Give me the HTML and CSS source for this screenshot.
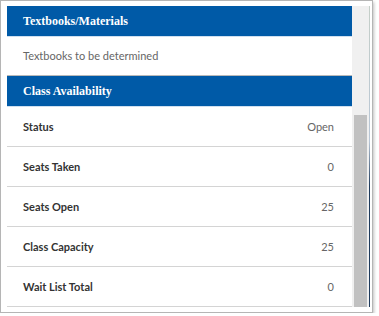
FILE: index.html
```html
<!DOCTYPE html>
<html lang="en">
<head>
    <meta charset="UTF-8">
    <meta name="viewport" content="width=device-width, initial-scale=1.0">
    <title>Class Details</title>
    <link rel="stylesheet" href="styles.css">
</head>
<body>
    <div class="frame">
        <div class="viewport">
            <div class="content">
                <div class="section-title">Textbooks/Materials</div>
                <div class="note">Textbooks to be determined</div>
                <div class="section-title">Class Availability</div>
                <div class="row">
                    <span class="label">Status</span>
                    <span class="value">Open</span>
                </div>
                <div class="row">
                    <span class="label">Seats Taken</span>
                    <span class="value">0</span>
                </div>
                <div class="row">
                    <span class="label">Seats Open</span>
                    <span class="value">25</span>
                </div>
                <div class="row">
                    <span class="label">Class Capacity</span>
                    <span class="value">25</span>
                </div>
                <div class="row">
                    <span class="label">Wait List Total</span>
                    <span class="value">0</span>
                </div>
            </div>
            <div class="scrollbar">
                <div class="thumb"></div>
            </div>
            <div class="edge"></div>
        </div>
    </div>
</body>
</html>
```

FILE: styles.css
```css
body {
    margin: 0;
    background: #fff;
    font-family: 'Lato', sans-serif;
}
.frame {
    width: 373px;
    height: 313px;
    border: 1px solid #b5b5b5;
    box-shadow: 1px 2px 3px rgba(0, 0, 0, 0.25);
    background: #fff;
    padding: 5px 2px 5px 6px;
    box-sizing: border-box;
}
.viewport {
    display: flex;
    height: 301px;
    overflow: hidden;
}
.content {
    flex: 1;
    overflow: hidden;
}
.section-title {
    background: #005aa7;
    color: #fff;
    font-family: 'Liberation Serif', serif;
    font-weight: bold;
    font-size: 12px;
    height: 30px;
    line-height: 30px;
    padding-left: 16px;
    border-bottom: 1px solid #cfe0f0;
}
.note {
    height: 38px;
    line-height: 38px;
    padding-left: 16px;
    font-size: 11px;
    color: #666;
    border-bottom: 1px solid #b9b9b9;
}
.row {
    display: flex;
    justify-content: space-between;
    align-items: center;
    height: 39px;
    padding: 0 18px 0 16px;
    border-bottom: 1px solid #d4d4d4;
    font-size: 11px;
}
.label {
    font-weight: bold;
    color: #333;
}
.value {
    color: #666;
}
.scrollbar {
    width: 17px;
    background: #f0f0f0;
    padding: 109px 2px 0;
    box-sizing: border-box;
}
.thumb {
    height: 192px;
    background: #c1c1c1;
}
.edge {
    width: 1px;
    background: linear-gradient(#c5cfc8, #b8c6d6 45%, #1f3b5c 60%, #1f3b5c);
}
```
